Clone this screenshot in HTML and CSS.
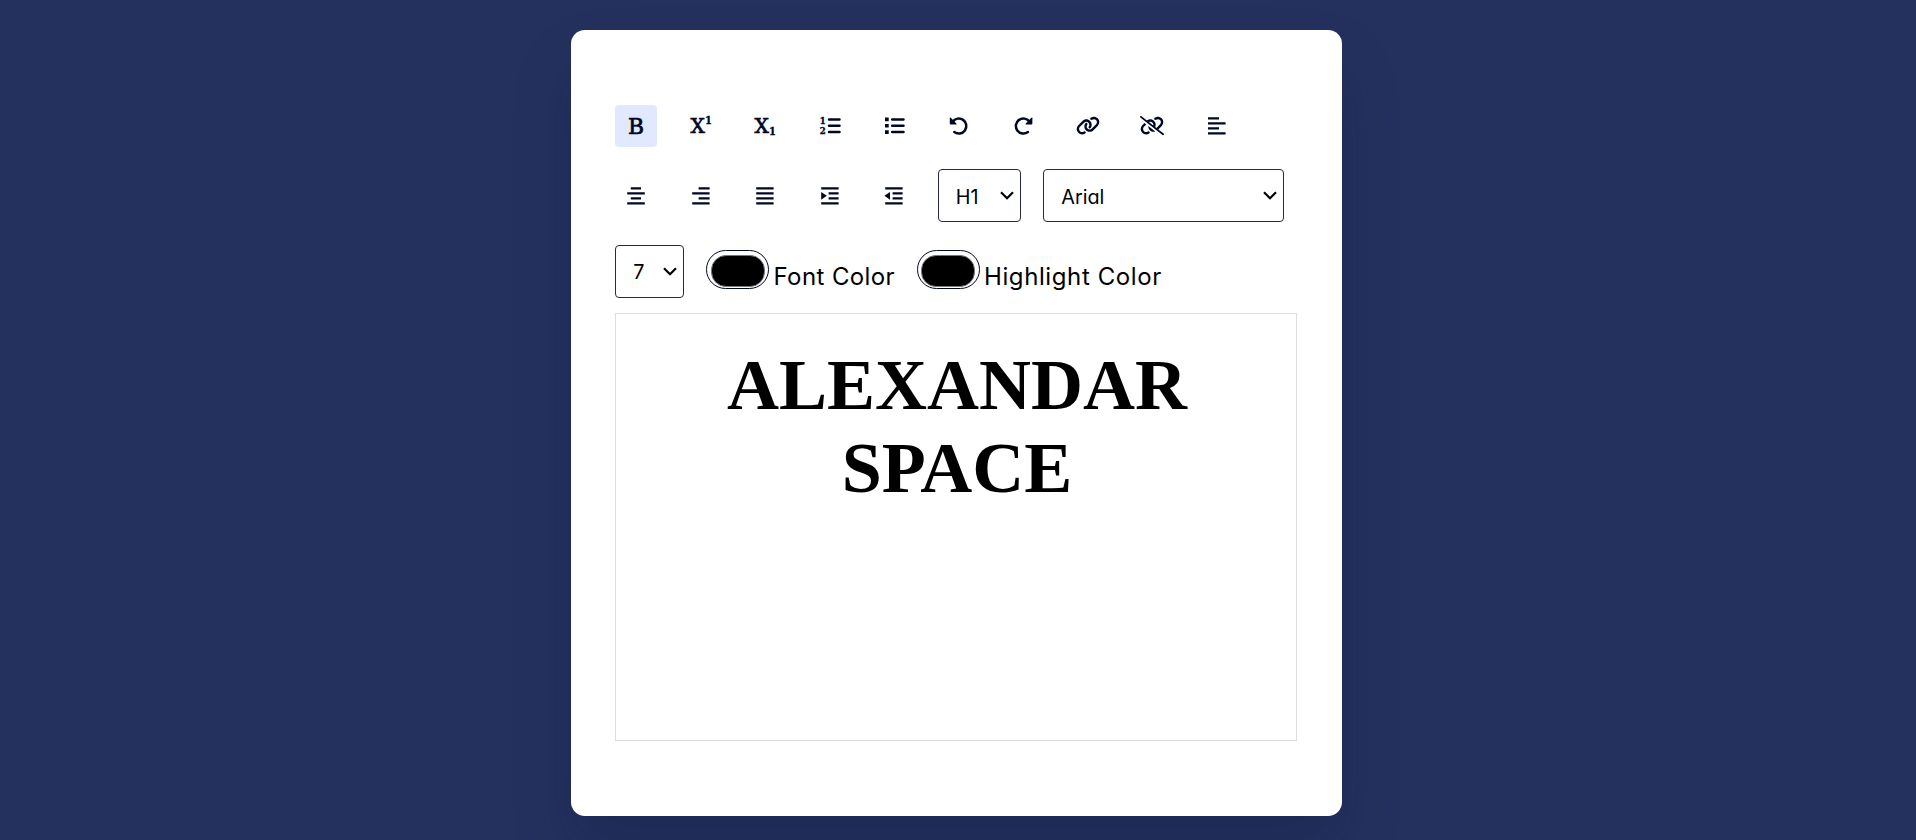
FILE: index.html
```html
<!DOCTYPE html>
<html lang="en">
<head>
<meta charset="utf-8">
<title>Text Editor</title>
<link rel="stylesheet" href="styles.css">
</head>
<body>
<main class="container">
  <div class="options">
    <button class="option active" aria-label="Bold"><svg viewBox="0 0 28 28"><text x="6" y="21.8" font-size="21.8">B</text></svg></button>
    <button class="option" aria-label="Superscript"><svg viewBox="0 0 28 28"><text x="3.6" y="21" font-size="20.2">X</text><text class="digit" x="17.9" y="12.4" font-size="11">1</text></svg></button>
    <button class="option" aria-label="Subscript"><svg viewBox="0 0 28 28"><text x="3.6" y="21" font-size="20.2">X</text><text class="digit" x="17.9" y="23.1" font-size="11">1</text></svg></button>
    <button class="option" aria-label="Ordered list"><svg viewBox="0 0 28 28"><text class="digit" x="3.8" y="12.2" font-size="9.5">1</text><text class="digit" x="3.8" y="22.2" font-size="9.5">2</text><path class="line" d="M13 7.5h10.5M13 13.8h10.5M13 20.1h10.5"/></svg></button>
    <button class="option" aria-label="Unordered list"><svg viewBox="0 0 28 28"><path d="M5 5.6h3.7v3.7H5zM5 11.9h3.7v3.7H5zM5 18.2h3.7v3.7H5z"/><path class="line" d="M12.2 7.5h11.3M12.2 13.8h11.3M12.2 20.1h11.3"/></svg></button>
    <button class="option" aria-label="Undo"><svg viewBox="0 0 28 28"><path class="line" d="M7.6 9.8A7.5 7.5 0 1 1 9.3 20"/><path d="M4.8 6.2q0-1.2 1-.4l5.6 5.6q.8 1-.4 1H5.7q-.9 0-.9-.9z"/></svg></button>
    <button class="option" aria-label="Redo"><svg viewBox="0 0 28 28"><path class="line" d="M20.6 9.8A7.5 7.5 0 1 0 18.9 20"/><path d="M23.4 6.2q0-1.2-1-.4l-5.6 5.6q-.8 1 .4 1h5.3q.9 0 .9-.9z"/></svg></button>
    <button class="option" aria-label="Link"><svg class="link" viewBox="0 0 640 512"><path d="M579.8 267.7c56.5-56.5 56.5-148 0-204.5c-50-50-128.8-56.5-186.3-15.4l-1.6 1.1c-14.4 10.3-17.7 30.3-7.4 44.6s30.3 17.7 44.6 7.4l1.6-1.1c32.1-22.9 76-19.3 103.8 8.6c31.5 31.5 31.5 82.5 0 114L422.3 334.8c-31.5 31.5-82.5 31.5-114 0c-27.9-27.9-31.5-71.8-8.6-103.8l1.1-1.6c10.3-14.4 6.9-34.4-7.4-44.6s-34.4-6.9-44.6 7.4l-1.1 1.6C206.5 251.2 213 330 263 380c56.5 56.5 148 56.5 204.5 0L579.8 267.7zM60.2 244.3c-56.5 56.5-56.5 148 0 204.5c50 50 128.8 56.5 186.3 15.4l1.6-1.1c14.4-10.3 17.7-30.3 7.4-44.6s-30.3-17.7-44.6-7.4l-1.6 1.1c-32.1 22.9-76 19.3-103.8-8.6C74 372 74 321 105.5 289.5L217.7 177.2c31.5-31.5 82.5-31.5 114 0c27.9 27.9 31.5 71.8 8.6 103.9l-1.1 1.6c-10.3 14.4-6.9 34.4 7.4 44.6s34.4 6.9 44.6-7.4l1.1-1.6C433.5 260.8 427 182 377 132c-56.5-56.5-148-56.5-204.5 0L60.2 244.3z"/></svg></button>
    <button class="option" aria-label="Unlink"><svg class="link" viewBox="0 0 640 512"><path d="M38.8 5.1C28.4-3.1 13.3-1.2 5.1 9.2S-1.2 34.7 9.2 42.9l592 464c10.4 8.2 25.5 6.3 33.7-4.1s6.3-25.5-4.1-33.7L489.3 358.2l90.5-90.5c56.5-56.5 56.5-148 0-204.5c-50-50-128.8-56.5-186.3-15.4l-1.6 1.1c-14.4 10.3-17.7 30.3-7.4 44.6s30.3 17.7 44.6 7.4l1.6-1.1c32.1-22.9 76-19.3 103.8 8.6c31.5 31.5 31.5 82.5 0 114l-96 96-31.9-25C430.9 239.6 420.1 175.1 377 132c-52.2-52.3-134.5-56.2-191.3-11.7L38.8 5.1zM239 162c30.1-14.9 67.7-9.9 92.8 15.3c20 20 27.5 48.3 21.7 74.5L239 162zM406.6 416.4L220.9 270c-2.1 39.8 12.2 80.1 42.2 110c38.9 38.9 94.4 51 143.6 36.3zm-290-228.5L60.2 244.3c-56.5 56.5-56.5 148 0 204.5c50 50 128.8 56.5 186.3 15.4l1.6-1.1c14.4-10.3 17.7-30.3 7.4-44.6s-30.3-17.7-44.6-7.4l-1.6 1.1c-32.1 22.9-76 19.3-103.8-8.6C74 372 74 321 105.5 289.5l61.8-61.8-50.6-39.9z"/></svg></button>
    <button class="option" aria-label="Align left"><svg viewBox="0 0 28 28"><path class="bar" d="M5 6.3h11M5 11.3h17.6M5 16.3h11M5 21.3h17.6"/></svg></button>
    <button class="option" aria-label="Align center"><svg viewBox="0 0 28 28"><path class="bar" d="M8.8 6.3h10.2M5.2 11.3h17.6M8.8 16.3h10.2M5.2 21.3h17.6"/></svg></button>
    <button class="option" aria-label="Align right"><svg viewBox="0 0 28 28"><path class="bar" d="M11.6 6.3h11M5.2 11.3h17.4M11.6 16.3h11M5.2 21.3h17.4"/></svg></button>
    <button class="option" aria-label="Justify"><svg viewBox="0 0 28 28"><path class="bar" d="M5.2 6.3h17.4M5.2 11.3h17.4M5.2 16.3h17.4M5.2 21.3h17.4"/></svg></button>
    <button class="option" aria-label="Indent"><svg viewBox="0 0 28 28"><path class="bar" d="M5.2 6.3h17.4M12.6 11.3h10M12.6 16.3h10M5.2 21.3h17.4"/><path d="M5.2 9.9l5.6 3.9-5.6 3.9z"/></svg></button>
    <button class="option" aria-label="Outdent"><svg viewBox="0 0 28 28"><path class="bar" d="M5.2 6.3h17.4M12.6 11.3h10M12.6 16.3h10M5.2 21.3h17.4"/><path d="M10 9.9l-5.6 3.9 5.6 3.9z"/></svg></button>
    <div class="select heading"><span>H1</span><svg class="chevron" viewBox="0 0 14 9"><path d="M1 1.2l6 6 6-6"/></svg></div>
    <div class="select family"><span>Arial</span><svg class="chevron" viewBox="0 0 14 9"><path d="M1 1.2l6 6 6-6"/></svg></div>
    <div class="select size"><span>7</span><svg class="chevron" viewBox="0 0 14 9"><path d="M1 1.2l6 6 6-6"/></svg></div>
    <div class="color"><span class="swatch"></span><span class="label">Font Color</span></div>
    <div class="color"><span class="swatch"></span><span class="label highlight">Highlight Color</span></div>
  </div>
  <div class="text-input" contenteditable="true"><div class="headline">ALEXANDAR SPACE</div></div>
</main>
</body>
</html>
```
FILE: styles.css
```css
* { box-sizing: border-box; }
body {
  margin: 0;
  height: 840px;
  overflow: hidden;
  background: #24315e;
  font-family: Inter, "Open Sans", sans-serif;
  font-feature-settings: "cv11";
  color: #000;
}
.container {
  width: 771px;
  height: 786px;
  margin: 29.6px 0 0 570.5px;
  padding: 75px 44.8px;
  background: #fff;
  border-radius: 14px;
  box-shadow: 0 35px 63px rgba(0, 0, 40, 0.15);
}
.options {
  display: flex;
  flex-wrap: wrap;
  align-items: center;
  gap: 22.6px 22.5px;
}
.option {
  display: grid;
  place-items: center;
  width: 42px;
  height: 42px;
  padding: 0;
  border: 0;
  border-radius: 4px;
  background: #fff;
  color: #010726;
}
.option.active { background: #e0e9ff; }
.option svg { width: 28px; height: 28px; fill: currentColor; overflow: visible; }
.option .link { width: 24px; height: 19.2px; }
.option text {
  font-family: "DejaVu Serif", serif;
  stroke: currentColor;
  stroke-width: 0.7;
}
.option .digit {
  font-family: "DejaVu Serif Condensed", "DejaVu Serif", serif;
  font-stretch: condensed;
  font-weight: 700;
  stroke-width: 0.3;
}
.line, .bar { fill: none; stroke: currentColor; stroke-width: 2.5; stroke-linecap: round; }
.bar { stroke-width: 2.2; stroke-linecap: butt; }
.select {
  display: flex;
  align-items: center;
  justify-content: space-between;
  height: 53px;
  padding: 2px 6px 0 17px;
  border: 1px solid #26294c;
  border-radius: 4px;
  font-size: 19.8px;
}
.heading { width: 83px; }
.family { width: 241px; }
.size { width: 69px; }
.chevron { width: 14px; height: 9px; margin-top: -2px; }
.chevron path { fill: none; stroke: #000; stroke-width: 2.2; }
.color { display: flex; align-items: center; gap: 4.5px; }
.swatch {
  width: 63px;
  height: 39px;
  margin-left: -0.8px;
  margin-bottom: 3px;
  padding: 3.5px;
  border: 1.5px solid #020929;
  border-radius: 20px;
}
.swatch::before {
  content: "";
  display: block;
  height: 100%;
  background: #000;
  border: 1px solid #777;
  border-radius: 15px;
}
.label {
  width: 121.3px;
  padding-top: 12px;
  font-size: 24px;
  line-height: 30px;
  letter-spacing: 0.4px;
  white-space: nowrap;
}
.highlight { width: 178px; letter-spacing: 0.6px; }
.text-input {
  height: 428px;
  margin-top: 15px;
  padding: 30.4px 68px 30px 70px;
  border: 1px solid #ddd;
}
.headline {
  font: 700 72px/82.7px "Liberation Serif", "Times New Roman", serif;
  text-align: center;
}
```
